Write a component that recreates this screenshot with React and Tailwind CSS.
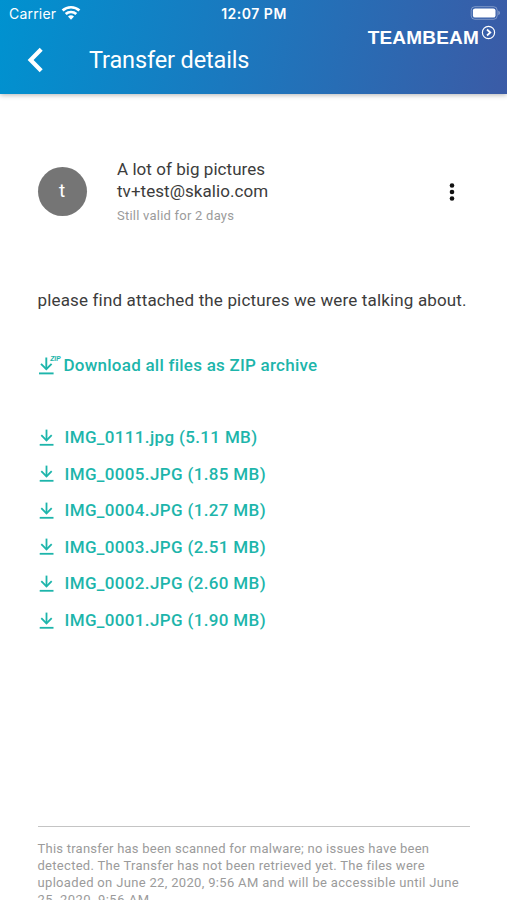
import React from 'react';

const files = [
  { name: 'IMG_0111.jpg', size: '5.11 MB' },
  { name: 'IMG_0005.JPG', size: '1.85 MB' },
  { name: 'IMG_0004.JPG', size: '1.27 MB' },
  { name: 'IMG_0003.JPG', size: '2.51 MB' },
  { name: 'IMG_0002.JPG', size: '2.60 MB' },
  { name: 'IMG_0001.JPG', size: '1.90 MB' },
];

const notice = [
  { text: 'This transfer has been scanned for malware; no issues have been', tracking: 'tracking-[0.24px]' },
  { text: 'detected. The Transfer has not been retrieved yet. The files were', tracking: 'tracking-[0.29px]' },
  { text: 'uploaded on June 22, 2020, 9:56 AM and will be accessible until June', tracking: 'tracking-[0.33px]' },
  { text: '25, 2020, 9:56 AM.', tracking: 'tracking-[0.5px]' },
];

function WifiIcon() {
  return (
    <svg width="20" height="16" viewBox="0 0 20 16" fill="none" stroke="currentColor" strokeWidth="2.7" className="-mt-[2px]">
      <path d="M1.6 5.6a12.2 12.2 0 0 1 16.8 0" />
      <path d="M4.7 9.1a7.7 7.7 0 0 1 10.6 0" />
      <path d="M10 14.8l-3-3.2a4.4 4.4 0 0 1 6 0z" fill="currentColor" stroke="none" />
    </svg>
  );
}

function BatteryIcon() {
  return (
    <svg width="31" height="14" viewBox="0 0 31 14" fill="none" className="-mt-[1px]">
      <rect x="1.2" y="0.7" width="26" height="12.6" rx="3.6" stroke="#fff" strokeOpacity="0.35" />
      <rect x="2.9" y="2.4" width="22.6" height="9.2" rx="2.2" fill="#fff" />
      <path d="M28.4 4.8c1.9.6 1.9 3.8 0 4.4z" fill="#fff" fillOpacity="0.45" />
    </svg>
  );
}

function DownloadIcon() {
  return (
    <svg width="16" height="18" viewBox="0 0 16 18" fill="none" stroke="currentColor" strokeWidth="1.8" className="shrink-0">
      <path d="M7.5 0.6v10.6" />
      <path d="M2.3 6.2l5.2 5.2 5.2-5.2" />
      <path d="M0.7 15.8h13.8" />
    </svg>
  );
}

function ZipIcon() {
  return (
    <svg width="26" height="22" viewBox="0 0 26 22" fill="none" stroke="currentColor" strokeWidth="1.9" className="shrink-0">
      <path d="M8.3 2.5V14" />
      <path d="M3 8.8l5.3 5.3 5.3-5.3" />
      <path d="M1 18.4h14.6" />
      <text
        x="12.2"
        y="6"
        fontSize="6.6"
        fontStyle="italic"
        fontWeight="700"
        textLength="10.5"
        lengthAdjust="spacingAndGlyphs"
        fill="currentColor"
        stroke="none"
      >
        ZIP
      </text>
    </svg>
  );
}

function Header() {
  return (
    <header className="h-[94px] shrink-0 text-white bg-[linear-gradient(100deg,#0092d0_0%,#1a79bf_45%,#3b5ba6_100%)] shadow-[0_1px_5px_rgba(0,0,0,0.3)]">
      <div className="grid grid-cols-3 items-center h-[27px] pl-[9px] pr-[6px]">
        <div className="flex items-center gap-[5px]">
          <span className="text-[14px] tracking-[0.2px] font-['Inter',sans-serif]">Carrier</span>
          <WifiIcon />
        </div>
        <span className="-ml-[2px] text-center text-[14px] font-semibold tracking-[0.5px] font-['Inter',sans-serif]">12:07 PM</span>
        <div className="flex justify-end">
          <BatteryIcon />
        </div>
      </div>
      <div className="flex items-center h-[66px] pl-[26px] pr-[11px]">
        <svg width="18" height="26" viewBox="0 0 18 26" fill="none" stroke="currentColor" strokeWidth="4.2">
          <path d="M15.2 2.2L4.6 13l10.6 10.8" />
        </svg>
        <h1 className="mt-[2px] ml-[45px] text-[23.5px] tracking-[-0.13px] whitespace-nowrap">Transfer details</h1>
        <div className="flex self-start ml-auto">
          <span className="mt-[1px] text-[19px] leading-[20px] font-bold tracking-[0.2px] font-['Liberation_Sans',sans-serif]">
            TEAMBEAM
          </span>
          <svg width="15" height="15" viewBox="0 0 15 15" fill="none" stroke="currentColor" className="-mt-[2.5px] ml-[2px]">
            <circle cx="7.5" cy="7.5" r="6.1" strokeWidth="1.2" />
            <path d="M6 4.5l3.3 3L6 10.5" strokeWidth="1.8" />
          </svg>
        </div>
      </div>
    </header>
  );
}

export default function App() {
  return (
    <div className="flex flex-col w-full h-screen overflow-hidden bg-white text-[#3c3c3c] font-['Roboto',sans-serif]">
      <Header />

      <main className="flex flex-col flex-1 min-h-0 px-[37.5px]">
        {/* Sender */}
        <section className="flex items-center mt-[63.5px] h-[68px]">
          <div className="flex items-center justify-center size-[49px] rounded-full bg-[#757575] text-white text-[19px]">t</div>
          <div className="ml-[30.5px] pt-[2px] whitespace-nowrap text-[17px] leading-[22px]">
            <p className="tracking-[0.05px]">A lot of big pictures</p>
            <p className="tracking-[0.05px]">tv+test@skalio.com</p>
            <p className="mt-[3px] text-[13px] text-[#9b9b9b] tracking-[0.23px]">Still valid for 2 days</p>
          </div>
          <svg width="6" height="18" viewBox="0 0 6 18" fill="#111" className="ml-auto mr-[14.5px]">
            <circle cx="3" cy="2.5" r="2.3" />
            <circle cx="3" cy="9" r="2.3" />
            <circle cx="3" cy="15.5" r="2.3" />
          </svg>
        </section>

        <p className="mt-[63.5px] text-[17px] leading-[22px] tracking-[0.155px] whitespace-nowrap">
          please find attached the pictures we were talking about.
        </p>

        {/* Downloads */}
        <a href="#" className="flex items-center mt-[44px] h-[22px] text-[17px] font-medium text-[#1db5ab] whitespace-nowrap">
          <ZipIcon />
          <span className="tracking-[0.24px]">Download all files as ZIP archive</span>
        </a>
        <ul className="mt-[42.4px] text-[17px] font-medium text-[#1db5ab] whitespace-nowrap">
          {files.map((file) => (
            <li key={file.name} className="flex items-center h-[36.6px] pl-[1px] gap-[10px]">
              <DownloadIcon />
              <span className="tracking-[0.35px]">
                {file.name} ({file.size})
              </span>
            </li>
          ))}
        </ul>

        <footer className="h-[74px] shrink-0 mt-auto border-t border-[#c4c4c4] pt-[12.6px] text-[13px] leading-[17.1px] text-[#9b9b9b] whitespace-nowrap">
          {notice.map((line) => (
            <p key={line.text} className={line.tracking}>{line.text}</p>
          ))}
        </footer>
      </main>
    </div>
  );
}
